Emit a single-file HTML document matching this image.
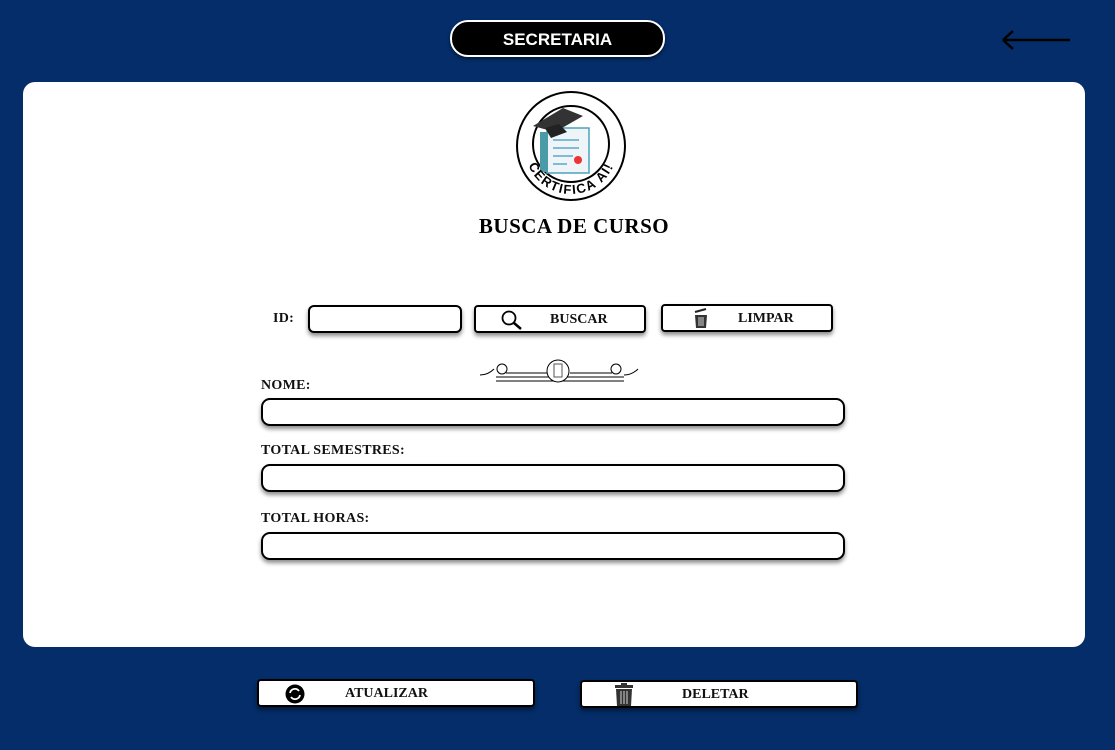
<!DOCTYPE html>
<html><head><meta charset="utf-8"><style>
*{box-sizing:border-box;margin:0;padding:0}
body{width:1115px;height:750px;background:#042d69;position:relative;overflow:hidden;font-family:"Liberation Serif",serif}
.abs{position:absolute}
.sec{left:450px;top:20px;width:215px;height:37px;background:#000;border:2px solid #fff;border-radius:18px;color:#fff;font:bold 17px "Liberation Sans",sans-serif;text-align:center;line-height:35px;box-shadow:0 2px 3px rgba(0,0,0,.5)}
.card{left:23px;top:82px;width:1062px;height:565px;background:#fff;border-radius:12px}
.lbl{font-weight:bold;font-size:14px;color:#111;letter-spacing:.3px}
.inp{border:2px solid #000;border-radius:6px;background:#fff;box-shadow:0 3px 4px rgba(0,0,0,.45)}
.btn{border:2px solid #000;border-radius:4px;background:#fff;box-shadow:0 3px 4px rgba(0,0,0,.45);font-weight:bold;font-size:14px;color:#111}
.btn span{position:absolute;top:5px}
</style></head><body>
<div class="abs sec">SECRETARIA</div>
<svg class="abs" style="left:1000px;top:28px" width="72" height="24"><path d="M3 12H70M3 12L13 3M3 12L13 21" stroke="#000" stroke-width="2.5" fill="none"/></svg>
<div class="abs card"></div>
<svg class="abs" style="left:515px;top:90px" width="112" height="112" viewBox="0 0 112 112">
<defs><path id="arc" d="M10 58A46 46 0 0 0 102 58"/></defs>
<circle cx="56" cy="56" r="54" fill="#fff" stroke="#000" stroke-width="2"/>
<circle cx="56" cy="54" r="38" fill="#fff" stroke="#000" stroke-width="2"/>
<rect x="32" y="38" width="42" height="45" fill="#eef4f8" stroke="#4aa3b8" stroke-width="1.5"/>
<rect x="25" y="42" width="8" height="40" fill="#4a9aa8"/>
<path d="M38 50h26M38 58h26M38 66h20M38 74h14" stroke="#5aa9c8" stroke-width="1.5"/>
<circle cx="63" cy="70" r="4" fill="#e33"/>
<path d="M18 36L48 18L68 26L40 42Z" fill="#333"/>
<path d="M30 38L44 34L52 42L36 48Z" fill="#222"/>
<text font-family="Liberation Sans" font-weight="bold" font-size="13" fill="#000" letter-spacing="1.5"><textPath href="#arc" startOffset="50%" text-anchor="middle">CERTIFICA AI!</textPath></text>
</svg>
<div class="abs" style="left:0;width:1148px;top:214px;text-align:center;font-weight:bold;font-size:21px;letter-spacing:.5px">BUSCA DE CURSO</div>
<div class="abs lbl" style="left:273px;top:311px">ID:</div>
<div class="abs inp" style="left:308px;top:305px;width:154px;height:28px"></div>
<div class="abs btn" style="left:474px;top:305px;width:172px;height:28px">
<svg class="abs" style="left:24px;top:2px" width="24" height="22"><circle cx="9" cy="9" r="6.5" stroke="#000" stroke-width="1.8" fill="none"/><path d="M14 14L21 20" stroke="#000" stroke-width="2.5"/></svg><span style="left:74px">BUSCAR</span></div>
<div class="abs btn" style="left:661px;top:304px;width:172px;height:28px">
<svg class="abs" style="left:30px;top:2px" width="16" height="22"><path d="M2 4L13 1" stroke="#222" stroke-width="2"/><path d="M2 7h12l-1 13H3z" fill="#333"/><path d="M6 9v9M8 9v9M10 9v9" stroke="#fff" stroke-width=".8"/></svg><span style="left:75px;top:5px">LIMPAR</span></div>
<svg class="abs" style="left:478px;top:357px" width="162" height="28"><path d="M2 18c6 0 10-2 14-6M18 20h128M18 24h128M146 18c6 0 10-2 14-6" stroke="#000" fill="none"/><circle cx="24" cy="12" r="5" fill="none" stroke="#000"/><circle cx="138" cy="12" r="5" fill="none" stroke="#000"/><path d="M28 16h42M92 16h42" stroke="#000"/><circle cx="80" cy="14" r="11" fill="#fff" stroke="#000"/><rect x="76" y="7" width="8" height="13" fill="none" stroke="#555"/></svg>
<div class="abs lbl" style="left:261px;top:378px">NOME:</div>
<div class="abs inp" style="left:261px;top:398px;width:584px;height:28px;border-radius:9px"></div>
<div class="abs lbl" style="left:261px;top:443px">TOTAL SEMESTRES:</div>
<div class="abs inp" style="left:261px;top:464px;width:584px;height:28px;border-radius:9px"></div>
<div class="abs lbl" style="left:261px;top:511px">TOTAL HORAS:</div>
<div class="abs inp" style="left:261px;top:532px;width:584px;height:28px;border-radius:9px"></div>
<div class="abs btn" style="left:257px;top:679px;width:278px;height:28px">
<svg class="abs" style="left:26px;top:3px" width="20" height="20"><circle cx="10" cy="10" r="9.5" fill="#000"/><path d="M5 9a5 5 0 0 1 9-2M15 11a5 5 0 0 1-9 2" stroke="#fff" stroke-width="1.8" fill="none"/></svg><span style="left:86px">ATUALIZAR</span></div>
<div class="abs btn" style="left:580px;top:680px;width:278px;height:28px">
<svg class="abs" style="left:32px;top:1px" width="20" height="24"><rect x="1" y="2" width="18" height="3" fill="#333"/><rect x="7" y="0" width="6" height="3" fill="#333"/><path d="M2 6h16l-1 17H3z" fill="#333"/><path d="M7 8v13M10 8v13M13 8v13" stroke="#fff" stroke-width=".8"/></svg><span style="left:100px">DELETAR</span></div>
</body></html>
